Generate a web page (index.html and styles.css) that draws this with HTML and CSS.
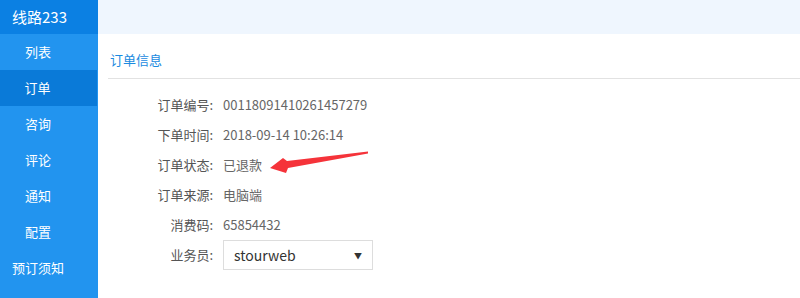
FILE: index.html
```html
<!DOCTYPE html>
<html lang="zh-CN">
<head>
    <meta charset="UTF-8">
    <title>订单信息</title>
    <link rel="stylesheet" href="styles.css">
</head>
<body>
    <div class="layout">
        <aside class="sidebar">
            <div class="side-title">线路233</div>
            <ul class="side-nav">
                <li>列表</li>
                <li class="active">订单</li>
                <li>咨询</li>
                <li>评论</li>
                <li>通知</li>
                <li>配置</li>
                <li>预订须知</li>
            </ul>
        </aside>

        <main class="main">
            <div class="topbar"></div>
            <div class="panel">
                <div class="panel-title">订单信息</div>
                <div class="info-list">
                    <div class="info-row">
                        <span class="info-label">订单编号:</span>
                        <span class="info-value">00118091410261457279</span>
                    </div>
                    <div class="info-row">
                        <span class="info-label">下单时间:</span>
                        <span class="info-value">2018-09-14 10:26:14</span>
                    </div>
                    <div class="info-row">
                        <span class="info-label">订单状态:</span>
                        <span class="info-value">已退款</span>
                        <svg class="pointer" width="110" height="30" viewBox="0 0 110 30">
                            <polygon points="2,19 15,9 19,12 100,2.5 100,4.5 20,19 18,24" fill="#f5333a"/>
                        </svg>
                    </div>
                    <div class="info-row">
                        <span class="info-label">订单来源:</span>
                        <span class="info-value">电脑端</span>
                    </div>
                    <div class="info-row">
                        <span class="info-label">消费码:</span>
                        <span class="info-value">65854432</span>
                    </div>
                    <div class="info-row">
                        <span class="info-label">业务员:</span>
                        <div class="select-box">
                            <span>stourweb</span>
                            <span class="caret">▼</span>
                        </div>
                    </div>
                </div>
            </div>
        </main>
    </div>
</body>
</html>
```

FILE: styles.css
```css
body {
  margin: 0;
  background: #fff;
  font-family: "Microsoft YaHei", "Noto Sans CJK SC", "Liberation Sans", sans-serif;
  font-size: 13px;
  color: #555;
  overflow: hidden;
}

.layout {
  display: flex;
  height: 298px;
}

/* 左侧菜单 */
.sidebar {
  width: 98px;
  flex-shrink: 0;
  background: #2294ef;
  color: #fff;
}

.side-title {
  height: 34px;
  line-height: 34px;
  padding-left: 12px;
  background: #0b80e3;
  font-size: 15px;
}

.side-nav {
  list-style: none;
  margin: 0;
  padding: 0;
}

.side-nav li {
  height: 36px;
  line-height: 36px;
  padding-right: 22px;
  text-align: center;
  font-size: 13px;
}

.side-nav li.active {
  background: #0a7ad8;
  margin-right: 1px;
}

/* 右侧内容 */
.main {
  flex: 1;
}

.topbar {
  height: 34px;
  background: #eff6fe;
}

.panel {
  padding-left: 10px;
}

.panel-title {
  height: 44px;
  line-height: 52px;
  padding-left: 2px;
  color: #1a8ae0;
  border-bottom: 1px solid #e2e2e2;
}

.info-list {
  padding-top: 10px;
}

.info-row {
  display: flex;
  align-items: center;
  height: 30px;
  position: relative;
}

.info-label {
  width: 105px;
  text-align: right;
  margin-right: 10px;
  color: #555;
}

.info-value {
  color: #666;
}

.pointer {
  position: absolute;
  left: 160px;
  top: 0;
}

.select-box {
  margin-top: 2px;
  width: 128px;
  height: 28px;
  border: 1px solid #ddd;
  display: flex;
  align-items: center;
  justify-content: space-between;
  padding: 0 10px;
  font-size: 14px;
  color: #333;
}

.caret {
  font-size: 8px;
  color: #333;
}
```
